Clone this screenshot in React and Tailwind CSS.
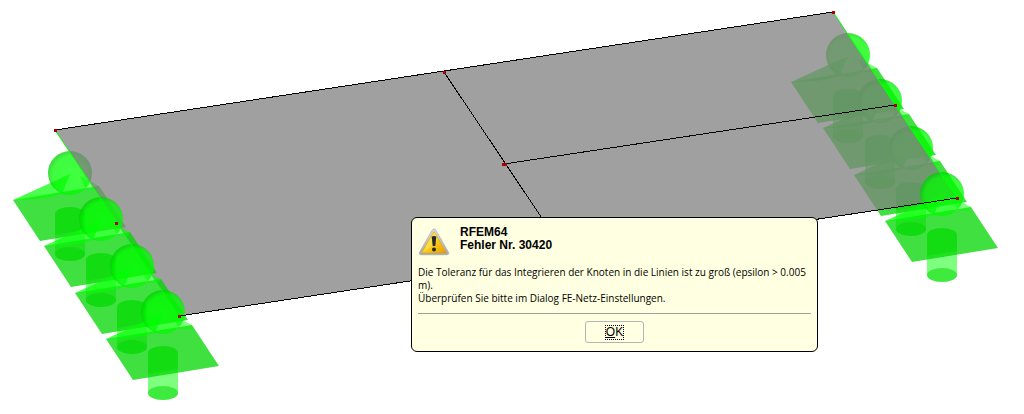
import React from 'react';

const PLATE = '55,130 833,12 957,198 179,316';

const leftSupports = [[70, 173], [101, 219], [132, 266], [163, 312]];
const rightSupports = [[848, 55], [880, 101], [911, 148], [942, 194]];

const nodes = [
  [55, 130], [444, 72], [833, 12], [895, 105], [957, 198], [503, 164], [505, 164], [116, 223], [179, 316],
];

const tones = {
  bright: { fill: '#00d600', light: '#00ff00', ball: 'url(#ballBright)' },
  muted: { fill: '#148c14', light: '#148c14', ball: 'url(#ballMuted)' },
};

const Support = ({ at, tone = 'bright' }) => {
  const { fill, light, ball } = tones[tone];
  return (
    <g transform={`translate(${at[0]} ${at[1]})`}>
      {/* Column */}
      <path d="M-15 41V81A15 7 0 0 0 15 81V41A15 7 0 0 0 -15 41Z" fill={light} opacity="0.5" />
      <ellipse cx="0" cy="81" rx="15" ry="7" fill={fill} opacity="0.5" />
      {/* Base plane */}
      <polygon points="-57,27 29,13 56,54 -30,68" fill={fill} opacity="0.75" />
      <path d="M-15 41A15 7 0 0 1 15 41V57L-15 62Z" fill={fill} opacity="0.4" />
      {/* Hinge flaps */}
      <path d="M-57 27L0 1L-8 21Q-28 27 -57 27Z" fill={light} opacity="0.7" />
      <path d="M10 3L29 13L27 17L16 17Z" fill={light} opacity="0.5" />
      <circle r="22" fill={ball} opacity="0.75" />
    </g>
  );
};

const Scene = () => (
  <svg viewBox="0 0 1024 414" className="block w-full" role="img" aria-label="FE-Modell">
    <defs>
      <radialGradient id="ballBright" cx="0.55" cy="0.55" r="0.55">
        <stop offset="0" stopColor="#00ff00" />
        <stop offset="0.8" stopColor="#00fa00" />
        <stop offset="1" stopColor="#00d000" />
      </radialGradient>
      <radialGradient id="ballMuted" cx="0.5" cy="0.55" r="0.5">
        <stop offset="0" stopColor="#1c961c" />
        <stop offset="0.8" stopColor="#1c901c" />
        <stop offset="1" stopColor="#148214" />
      </radialGradient>
      <clipPath id="onPlate">
        <polygon points={PLATE} />
      </clipPath>
      <clipPath id="offPlate">
        <path clipRule="evenodd" d="M0 0H1024V414H0ZM55 130L833 12L957 198L179 316Z" />
      </clipPath>
    </defs>

    <polygon points={PLATE} fill="#a0a0a0" />

    {/* Supports behind the plate */}
    <g clipPath="url(#onPlate)">
      <g opacity="0.45">
        <Support at={leftSupports[0]} tone="muted" />
        {rightSupports.slice(0, 3).map((p) => <Support key={p[0]} at={p} tone="muted" />)}
      </g>
    </g>
    <g clipPath="url(#offPlate)">
      <Support at={leftSupports[0]} />
      {rightSupports.slice(0, 3).map((p) => <Support key={p[0]} at={p} />)}
    </g>

    {/* Supports in front */}
    {leftSupports.slice(1).map((p) => <Support key={p[0]} at={p} />)}
    <Support at={rightSupports[3]} />

    {/* Supported edges */}
    <g stroke="#00ff00" strokeWidth="1">
      <path d="M55 130L179 316" />
      <path d="M833 12L957 198" />
    </g>

    {/* Lines */}
    <g stroke="#000000" strokeWidth="1" fill="none" shapeRendering="crispEdges">
      <path d="M55 130L833 12" />
      <path d="M179 316L957 198" />
      <path d="M444 72L568 257" />
      <path d="M504 164L895 105" />
    </g>

    {/* Nodes */}
    {nodes.map(([x, y]) => (
      <rect key={`${x}-${y}`} x={x - 1} y={y - 1} width="3" height="3" fill="#a80000" />
    ))}
  </svg>
);

const WarningIcon = () => (
  <svg viewBox="0 0 32 30" className="mt-0.5 h-[30px] w-8 shrink-0" aria-hidden="true">
    <defs>
      <linearGradient id="warnFill" x1="0" y1="0" x2="1" y2="1">
        <stop offset="0" stopColor="#ffe95c" />
        <stop offset="0.5" stopColor="#fcd116" />
        <stop offset="1" stopColor="#e59a00" />
      </linearGradient>
      <linearGradient id="warnRim" x1="0" y1="0" x2="0" y2="1">
        <stop offset="0" stopColor="#dcdcdc" />
        <stop offset="1" stopColor="#a9a9a9" />
      </linearGradient>
    </defs>
    <path d="M16 1Q17.300 1 18 2.300L30.600 24.500Q31.300 26.600 29 26.800H3Q0.700 26.600 1.400 24.500L14 2.300Q14.700 1 16 1Z" fill="url(#warnRim)" stroke="#a5a5a5" strokeWidth="0.6" />
    <path d="M16 3.500L28.500 25H3.500Z" fill="url(#warnFill)" stroke="#d39b10" strokeWidth="0.5" />
    <path d="M6 22Q17 20 19.500 10L16 4L4.500 24.500Z" fill="#fff2a0" opacity="0.3" />
    <path d="M13.700 8.500Q16 7.300 18.300 8.500L17.300 18H14.700Z" fill="#28282c" />
    <circle cx="16" cy="21.500" r="2" fill="#28282c" />
  </svg>
);

const ErrorDialog = () => (
  <div
    role="alertdialog"
    aria-labelledby="dialog-title"
    aria-describedby="dialog-message"
    className="absolute left-[411px] top-[217px] w-[407px] rounded-md border border-black bg-[#ffffe1] px-1.5 pt-2 pb-2 font-['Liberation_Sans',Arial,sans-serif] text-black"
  >
    <div className="flex gap-2.5">
      <WarningIcon />
      <h1 id="dialog-title" className="text-xs leading-[13px] font-bold">
        RFEM64
        <br />
        Fehler Nr. 30420
      </h1>
    </div>
    <p id="dialog-message" className="mt-2 font-['Open_Sans',sans-serif] text-[10px] leading-[13px]">
      Die Toleranz für das Integrieren der Knoten in die Linien ist zu groß (epsilon &gt; 0.005 m).
      <br />
      Überprüfen Sie bitte im Dialog FE-Netz-Einstellungen.
    </p>
    <hr className="mt-2 border-[#a0a0a0]" />
    <div className="mt-[7px] flex justify-center">
      <button type="button" className="flex h-[22px] w-[59px] items-center justify-center rounded-[3px] border border-[#b4b4b4] text-xs">
        <span className="border border-dotted border-black leading-[13px]">
          <span className="underline">O</span>K
        </span>
      </button>
    </div>
  </div>
);

export default function App() {
  return (
    <main className="relative bg-white">
      <Scene />
      <ErrorDialog />
    </main>
  );
}
